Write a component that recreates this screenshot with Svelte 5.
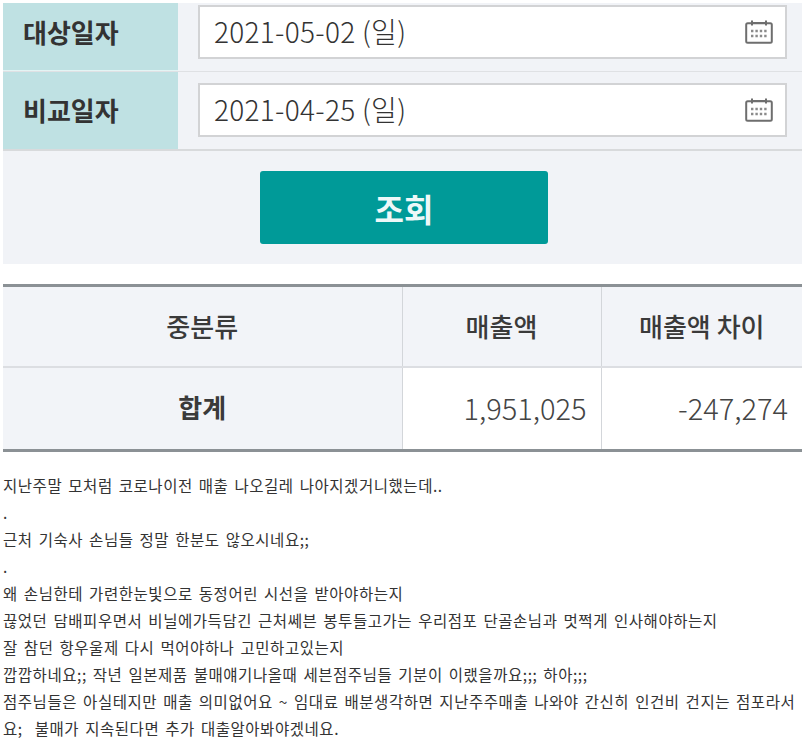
<script>
	const fields = [
		{ label: '대상일자', value: '2021-05-02 (일)' },
		{ label: '비교일자', value: '2021-04-25 (일)' }
	];
	const lines = [
		'지난주말 모처럼 코로나이전 매출 나오길레 나아지겠거니했는데..',
		'.',
		'근처 기숙사 손님들 정말 한분도 않오시네요;;',
		'.',
		'왜 손님한테 가련한눈빛으로 동정어린 시선을 받아야하는지',
		'끊었던 담배피우면서 비닐에가득담긴 근처쎄븐 봉투들고가는 우리점포 단골손님과 멋쩍게 인사해야하는지',
		'잘 참던 항우울제 다시 먹어야하나 고민하고있는지',
		'깝깝하네요;; 작년 일본제품 불매얘기나올때 세븐점주님들 기분이 이랬을까요;;; 하아;;;',
		'점주님들은 아실테지만 매출 의미없어요 ~ 임대료 배분생각하면 지난주주매출 나와야 간신히 인건비 건지는 점포라서',
		'요;  불매가 지속된다면 추가 대출알아봐야겠네요.'
	];
</script>

<div class="page">
	<section class="search">
		{#each fields as f}
			<div class="row">
				<div class="label">{f.label}</div>
				<div class="cell">
					<div class="input">
						<span>{f.value}</span>
						<svg width="28" height="24" viewBox="0 0 28 24" fill="none" stroke="#6e6e6e">
							<rect x="1.2" y="3.2" width="25.6" height="19.6" rx="1.5" stroke-width="2" />
							<path d="M7 0.5v5M21 0.5v5M7 3h14" stroke-width="2" />
							<path d="M6 11h16M6 16h16" stroke-width="2.4" stroke-dasharray="2.4 2" stroke="#8a8a8a" />
						</svg>
					</div>
				</div>
			</div>
		{/each}
		<div class="actions">
			<button>조회</button>
		</div>
	</section>

	<table>
		<thead>
			<tr>
				<th class="c1">중분류</th>
				<th class="c2">매출액</th>
				<th class="c3">매출액 차이</th>
			</tr>
		</thead>
		<tbody>
			<tr>
				<th>합계</th>
				<td>1,951,025</td>
				<td>-247,274</td>
			</tr>
		</tbody>
	</table>

	<div class="post">
		{#each lines as line}
			<p>{line}</p>
		{/each}
	</div>
</div>

<style>
	:global(body) {
		margin: 0;
		background: #fff;
	}
	.page {
		width: 802px;
		height: 741px;
		overflow: hidden;
		box-sizing: border-box;
		padding: 3px 0 0 3px;
		font-family: 'Noto Sans CJK KR', 'Noto Sans', sans-serif;
		color: #333;
	}
	.search {
		background: #f1f3f7;
		height: 261px;
	}
	.row {
		display: flex;
		height: 69px;
		border-bottom: 1px solid #dfe1e4;
		box-sizing: border-box;
	}
	.row + .row {
		height: 79px;
		border-bottom: 2px solid #d8dadc;
	}
	.label {
		box-sizing: border-box;
		flex: none;
		width: 175px;
		background: #bfe1e3;
		padding: 0 0 2px 20px;
		display: flex;
		align-items: center;
		font-size: 26px;
		font-weight: 700;
		color: #333;
	}
	.row:first-child .label {
		padding-bottom: 10px;
		border-bottom: 1px solid #e4f4f4;
	}
	.cell {
		flex: 1;
		padding: 2px 15px 0 20px;
	}
	.row + .row .cell {
		padding-top: 11px;
	}
	.input {
		box-sizing: border-box;
		height: 54px;
		background: #fff;
		border: 2px solid #d2d3d5;
		display: flex;
		align-items: center;
		justify-content: space-between;
		padding: 0 12px 0 14px;
		font-size: 28px;
		font-weight: 300;
		letter-spacing: 0.3px;
		color: #333;
	}
	.input span {
		position: relative;
		top: -1px;
	}
	.actions {
		display: flex;
		justify-content: center;
		padding-top: 20px;
		padding-left: 3px;
	}
	button {
		width: 288px;
		height: 73px;
		background: #009a98;
		border: 0;
		border-radius: 3px;
		color: #eef8f8;
		font: 700 32px 'Noto Sans CJK KR', sans-serif;
	}
	table {
		width: 799px;
		margin-top: 20px;
		border-collapse: collapse;
		table-layout: fixed;
		border-top: 3px solid #8b9195;
		border-bottom: 3px solid #8b9195;
		font-size: 27px;
	}
	th, td {
		border-left: 1px solid #d3d6da;
		height: 84px;
		padding: 0 0 3px;
		box-sizing: border-box;
	}
	th:first-child {
		border-left: 0;
	}
	th {
		background: #f2f4f8;
		font-weight: 700;
		color: #3a3a3a;
	}
	thead th {
		height: 81px;
		padding-bottom: 2px;
		border-bottom: 2px solid #dcdee2;
		font-weight: 500;
		font-size: 26px;
	}
	tbody th {
		font-size: 26px;
	}
	td {
		text-align: right;
		padding-right: 14px;
		font-weight: 300;
		font-size: 29px;
		color: #444;
	}
	.c1 {
		width: 399px;
	}
	.c2 {
		width: 199px;
	}
	.post {
		margin: 20px 0 0 0;
		font-family: 'Noto Sans CJK KR', sans-serif;
		font-size: 15.5px;
		font-weight: 400;
		color: #333;
		letter-spacing: 0.55px;
		word-spacing: 2px;
	}
	p {
		margin: 0;
		height: 27px;
		line-height: 27px;
		white-space: pre;
	}
</style>
